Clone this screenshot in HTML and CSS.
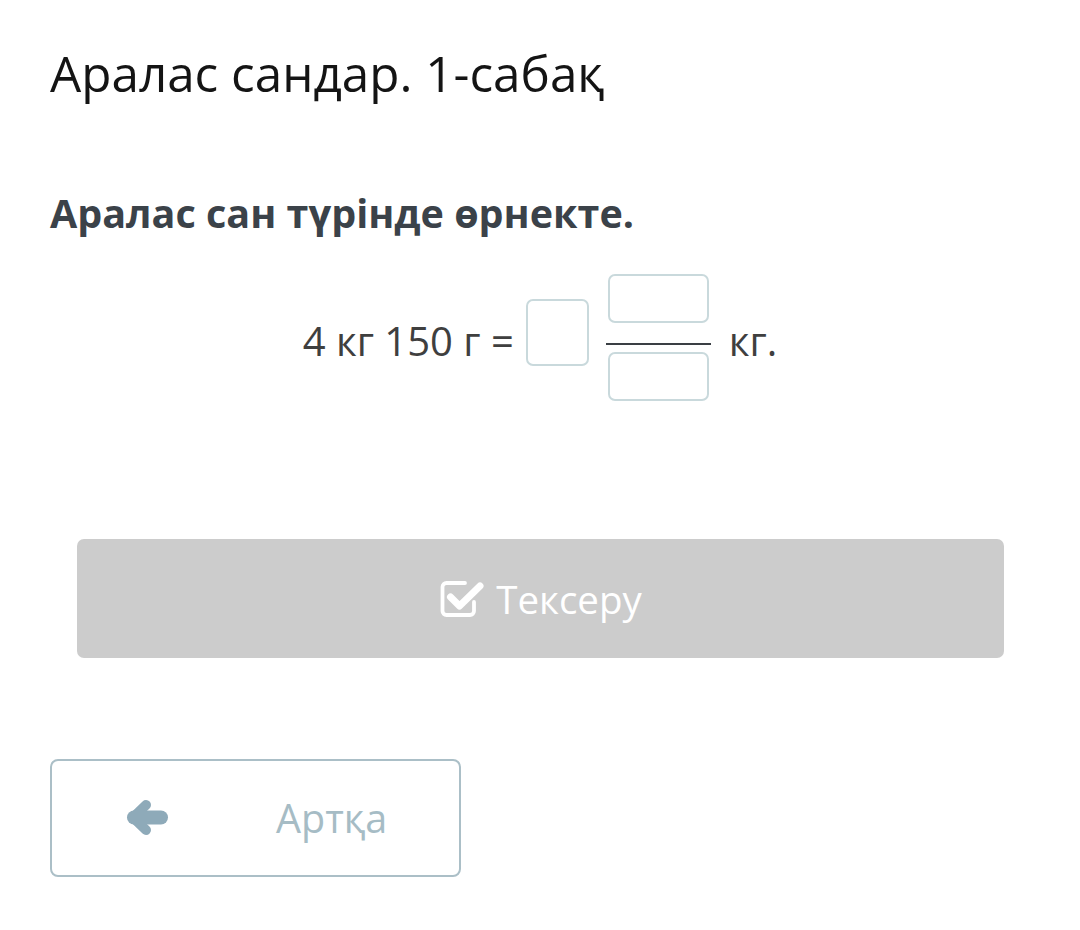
FILE: index.html
```html
<!DOCTYPE html>
<html lang="kk">
<head>
<meta charset="utf-8">
<title>Аралас сандар. 1-сабақ</title>
<link rel="stylesheet" href="styles.css">
</head>
<body>
<main class="page">
  <h1 class="title">Аралас сандар. 1-сабақ</h1>
  <h2 class="question">Аралас сан түрінде өрнекте.</h2>

  <div class="equation">
    <span class="eq-text">4 кг 150 г =</span>
    <span class="input whole"></span>
    <span class="fraction">
      <span class="input frac-box"></span>
      <span class="frac-line"></span>
      <span class="input frac-box"></span>
    </span>
    <span class="eq-text unit">кг.</span>
  </div>

  <button class="check-btn" type="button">
    <svg class="check-icon" viewBox="0 0 46 42" width="46" height="42" aria-hidden="true">
      <path d="M35 25 V34 a4 4 0 0 1 -4 4 H7.5 a4 4 0 0 1 -4 -4 V10 a4 4 0 0 1 4 -4 H26" fill="none" stroke="#fff" stroke-width="3.8" stroke-linecap="round" stroke-linejoin="round"/>
      <path d="M11.5 20 L20.5 29 L41 9" fill="none" stroke="#fff" stroke-width="7" stroke-linecap="round" stroke-linejoin="round"/>
    </svg>
    <span>Тексеру</span>
  </button>

  <button class="back-btn" type="button">
    <svg class="back-icon" viewBox="0 0 44 40" width="44" height="40" aria-hidden="true">
      <path d="M20 7 L7 19.5 L20 32" fill="none" stroke="#8eaab9" stroke-width="10" stroke-linecap="round" stroke-linejoin="round"/>
      <path d="M8 19.5 H35" fill="none" stroke="#8eaab9" stroke-width="14" stroke-linecap="round"/>
    </svg>
    <span class="back-label">Артқа</span>
  </button>
</main>
</body>
</html>
```

FILE: styles.css
```css
* {
  box-sizing: border-box;
}

html, body {
  margin: 0;
  padding: 0;
  background: #ffffff;
}

body {
  font-family: "Open Sans", "Noto Sans", sans-serif;
  width: 1080px;
  height: 930px;
  overflow: hidden;
}

.page {
  padding: 43px 50px 0 50px;
}

.title {
  margin: 0;
  font-size: 49.4px;
  line-height: 60px;
  font-weight: 400;
  color: #141414;
}

.question {
  margin: 87px 0 0 0;
  font-size: 39.5px;
  line-height: 46px;
  font-weight: 700;
  color: #3b4249;
}

.equation {
  margin-top: 38px;
  display: flex;
  align-items: center;
  justify-content: center;
  height: 127px;
  color: #3f3f3f;
  font-size: 40px;
}

.eq-text {
  line-height: 1;
  position: relative;
  top: 3px;
}

.input {
  display: block;
  border: 2px solid #c9d9dc;
  border-radius: 7px;
  background: #fff;
}

.whole {
  width: 63px;
  height: 67px;
  margin-left: 12px;
  margin-right: 17px;
  position: relative;
  top: -5px;
}

.fraction {
  display: flex;
  flex-direction: column;
  align-items: center;
  width: 105px;
}

.frac-box {
  width: 101px;
  height: 49px;
}

.frac-line {
  display: block;
  width: 105px;
  height: 2px;
  background: #3a3f44;
  margin: 20px 0 7px 0;
}

.unit {
  margin-left: 18px;
}

.check-btn {
  display: flex;
  align-items: center;
  justify-content: center;
  gap: 11px;
  width: 927px;
  height: 119px;
  margin: 138px 0 0 27px;
  border: none;
  border-radius: 7px;
  background: #cccccc;
  color: #ffffff;
  font-family: inherit;
  font-size: 38.5px;
  padding: 0;
}

.check-icon {
  display: block;
  margin-top: -2px;
}

.back-btn {
  display: flex;
  align-items: center;
  width: 411px;
  height: 118px;
  margin-top: 101px;
  padding: 0 0 0 74px;
  border: 2px solid #abbfc7;
  border-radius: 8px;
  background: #ffffff;
  font-family: inherit;
  font-size: 39.5px;
  color: #a6bcc5;
}

.back-icon {
  display: block;
}

.back-label {
  margin-left: 106px;
}
```
